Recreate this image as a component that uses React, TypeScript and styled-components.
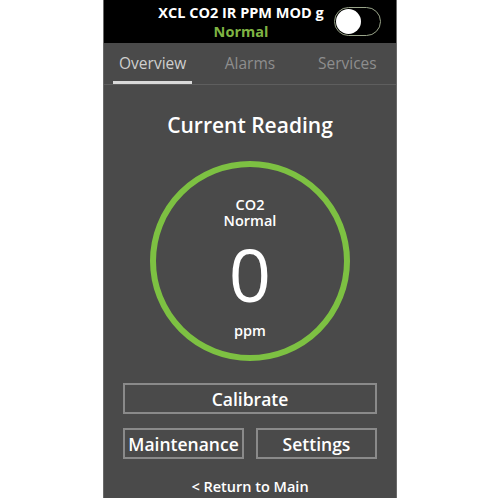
import styled, { createGlobalStyle } from "styled-components";

const GlobalStyle = createGlobalStyle`
  html, body {
    margin: 0;
    padding: 0;
    background: #ffffff;
  }
  body {
    font-family: "Open Sans", "Liberation Sans", sans-serif;
  }
  * {
    box-sizing: border-box;
  }
`;

const Page = styled.div`
  width: 500px;
  height: 500px;
  display: flex;
  justify-content: center;
  overflow: hidden;
`;

const Phone = styled.div`
  width: 294px;
  height: 498px;
  background: #4a4a4a;
  border-left: 1px solid #6a6a6a;
  border-right: 1px solid #6a6a6a;
  display: flex;
  flex-direction: column;
`;

const Header = styled.div`
  flex-shrink: 0;
  height: 43px;
  background: #000000;
  display: flex;
  align-items: center;
  padding-left: 44px;
  padding-right: 15px;
`;

const TitleBlock = styled.div`
  flex: 1;
  display: flex;
  flex-direction: column;
  align-items: center;
  line-height: 19px;
  font-weight: 700;
  font-size: 14.5px;
  padding-top: 1px;
`;

const Title = styled.div`
  color: #ffffff;
`;

const Status = styled.div`
  color: #7fb443;
`;

const Toggle = styled.div`
  width: 47px;
  height: 29px;
  border: 1.5px solid #9aa58a;
  border-radius: 15px;
  display: flex;
  align-items: center;
  padding: 0 1px;
`;

const Knob = styled.div`
  width: 25px;
  height: 25px;
  border-radius: 50%;
  background: #ffffff;
`;

const Tabs = styled.div`
  flex-shrink: 0;
  height: 42px;
  display: grid;
  grid-template-columns: repeat(3, 1fr);
  border-bottom: 1px solid #5e5e5e;
`;

const Tab = styled.div<{ $active?: boolean }>`
  margin: 0 9px;
  display: flex;
  align-items: center;
  justify-content: center;
  font-size: 15.5px;
  color: ${(p) => (p.$active ? "#cfcfcf" : "#8e8e8e")};
  border-bottom: 3px solid ${(p) => (p.$active ? "#d9d9d9" : "transparent")};
  padding-top: 2px;
`;

const Content = styled.div`
  flex: 1;
  display: flex;
  flex-direction: column;
  align-items: center;
  padding-top: 26px;
`;

const Heading = styled.div`
  color: #ffffff;
  font-size: 21px;
  font-weight: 600;
  line-height: 28px;
`;

const Gauge = styled.div`
  flex-shrink: 0;
  margin-top: 22px;
  width: 200px;
  height: 200px;
  border: 6px solid #7dc142;
  border-radius: 50%;
  display: flex;
  flex-direction: column;
  align-items: center;
  color: #ffffff;
  padding-top: 30px;
`;

const GaugeLabel = styled.div`
  font-size: 14.5px;
  font-weight: 600;
  line-height: 16px;
`;

const Value = styled.div`
  font-size: 74px;
  font-weight: 500;
  line-height: 74px;
  margin-top: 8px;
`;

const Unit = styled.div`
  font-size: 14.5px;
  font-weight: 600;
  line-height: 18px;
  margin-top: 11px;
`;

const Buttons = styled.div`
  margin-top: 22px;
  width: 254px;
  display: grid;
  grid-template-columns: 1fr 1fr;
  column-gap: 12px;
  row-gap: 14px;
`;

const Button = styled.div<{ $wide?: boolean }>`
  grid-column: ${(p) => (p.$wide ? "1 / span 2" : "auto")};
  height: 31px;
  border: 2px solid #8a8a8a;
  display: flex;
  align-items: center;
  justify-content: center;
  color: #ffffff;
  font-size: 17.5px;
  font-weight: 600;
`;

const Back = styled.div`
  margin-top: 19px;
  color: #ffffff;
  font-size: 14.5px;
  font-weight: 600;
  line-height: 18px;
`;

export default function App() {
  return (
    <>
      <GlobalStyle />
      <Page>
        <Phone>
          <Header>
            <TitleBlock>
              <Title>XCL CO2 IR PPM MOD g</Title>
              <Status>Normal</Status>
            </TitleBlock>
            <Toggle>
              <Knob />
            </Toggle>
          </Header>
          <Tabs>
            <Tab $active>Overview</Tab>
            <Tab>Alarms</Tab>
            <Tab>Services</Tab>
          </Tabs>
          <Content>
            <Heading>Current Reading</Heading>
            <Gauge>
              <GaugeLabel>CO2</GaugeLabel>
              <GaugeLabel>Normal</GaugeLabel>
              <Value>0</Value>
              <Unit>ppm</Unit>
            </Gauge>
            <Buttons>
              <Button $wide>Calibrate</Button>
              <Button>Maintenance</Button>
              <Button>Settings</Button>
            </Buttons>
            <Back>&lt; Return to Main</Back>
          </Content>
        </Phone>
      </Page>
    </>
  );
}
